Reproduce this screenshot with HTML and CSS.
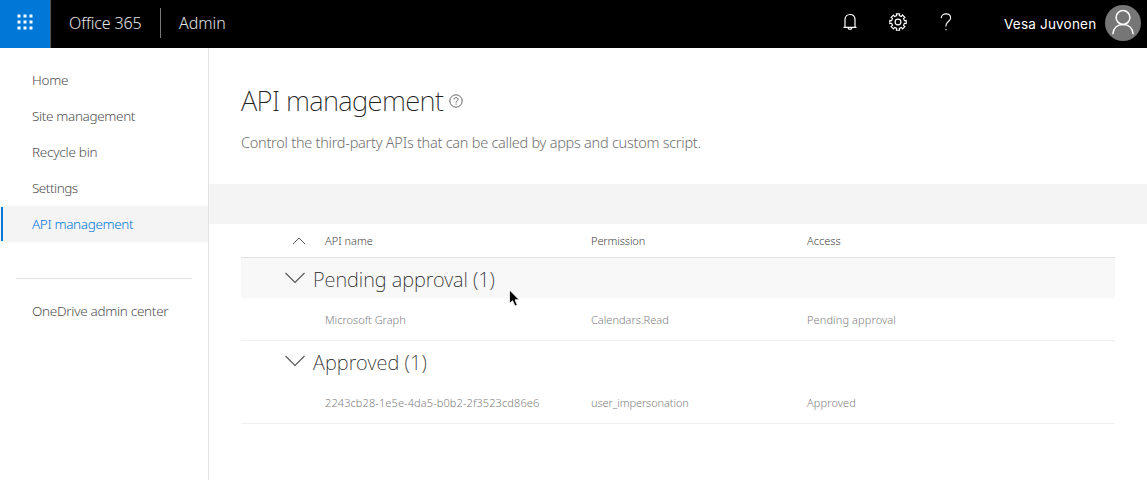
FILE: index.html
```html
<!DOCTYPE html>
<html lang="en">
<head>
<meta charset="utf-8">
<title>API management</title>
<link rel="stylesheet" href="styles.css">
</head>
<body>
<header class="topbar">
  <div class="launcher">
    <svg width="16" height="16" viewBox="0 0 16 16" fill="#fff"><path d="M.5.5h3v3h-3zM6.500.5h3v3h-3zM12.500.5h3v3h-3zM.5 6.500h3v3h-3zM6.500 6.500h3v3h-3zM12.500 6.500h3v3h-3zM.5 12.500h3v3h-3zM6.500 12.500h3v3h-3zM12.500 12.500h3v3h-3z"/></svg>
  </div>
  <span class="suite">Office 365</span>
  <span class="app">Admin</span>
  <div class="tools">
    <svg class="bell" width="16" height="18" viewBox="0 0 16 18" fill="none" stroke="#fff" stroke-width="1.2"><path d="M1.500 14.400H14.500M3 14.200V6.600C3 3.400 5.200 1.500 8 1.500S13 3.400 13 6.600V14.200M6 14.600Q6.300 16.300 8 16.300T10 14.600"/></svg>
    <svg class="gear" width="18" height="18" viewBox="0 0 18 18" fill="none" stroke="#fff" stroke-width="1.150"><path d="M7.700 2.600 7.400.8H10.600L10.300 2.600 12.400 3.500 13.500 2 15.900 4.400 14.500 5.500 15.400 7.700 17.200 7.400V10.600L15.400 10.300 14.500 12.500 15.900 13.600 13.600 15.900 12.400 14.500 10.300 15.400 10.600 17.200H7.400L7.700 15.400 5.500 14.500 4.400 15.900 2.100 13.600 3.500 12.400 2.600 10.300.8 10.600V7.400L2.600 7.700 3.500 5.500 2.100 4.400 4.400 2.100 5.500 3.500Z"/><circle cx="9" cy="9" r="2.900"/></svg>
    <svg class="help" width="12" height="18" viewBox="0 0 12 18" fill="none" stroke="#fff" stroke-width="1.100"><path d="M1.200 5.300C1.200 2.500 3.200.9 5.900.9S10.600 2.500 10.600 4.900C10.600 8.300 6 8.800 6 12.400V13.500M6 16V17.300"/></svg>
  </div>
  <span class="user">Vesa Juvonen</span>
  <svg class="avatar" width="36" height="36" viewBox="0 0 36 36"><circle cx="18" cy="18" r="18" fill="#767676"/><g fill="none" stroke="#fff" stroke-width="1.500"><circle cx="18" cy="12.500" r="6.900"/><path d="M7.800 29.200C8.300 23.200 12.300 19.400 18 19.400S27.700 23.200 28.200 29.200"/></g></svg>
</header>
<div class="body">
  <nav class="side">
    <a class="item home">Home</a>
    <a class="item site">Site management</a>
    <a class="item bin">Recycle bin</a>
    <a class="item settings">Settings</a>
    <a class="item active">API management</a>
    <hr class="rule">
    <a class="item onedrive">OneDrive admin center</a>
  </nav>
  <main class="main">
    <div class="heading">
      <h1 class="title">API management</h1>
      <svg width="14" height="14" viewBox="0 0 14 14" fill="none" stroke="#555" stroke-width=".9"><circle cx="7" cy="7" r="6.200"/><path d="M5 5.500C5 4.200 5.800 3.600 7 3.600S9 4.200 9 5.300C9 6.700 7.100 6.800 7.100 8.600M7.100 9.600V10.700"/></svg>
    </div>
    <p class="desc">Control the third-party APIs that can be called by apps and custom script.</p>
    <div class="commandbar"></div>
    <section class="list">
      <div class="row head">
        <svg class="sort" width="14" height="8" viewBox="0 0 14 8" fill="none" stroke="#555" stroke-width="1"><path d="M1 7 7 1 13 7"/></svg>
        <span class="c1">API name</span><span class="c2 perm">Permission</span><span class="c3">Access</span>
      </div>
      <div class="group hover">
        <svg class="chev" width="20" height="12" viewBox="0 0 20 12" fill="none" stroke="#555" stroke-width="1.100"><path d="M.5 1 10 10.500 19.500 1"/></svg>
        <h2 class="gname pending">Pending approval (1)</h2>
        <svg class="cursor" width="14" height="20" viewBox="0 0 14 20"><path d="M1.500 1V14.500L4.600 11.700 6.900 17 9.300 16 7 10.800H11.200Z" fill="#000" stroke="#fff" stroke-width=".8"/></svg>
      </div>
      <div class="row item-row">
        <span class="c1">Microsoft Graph</span><span class="c2">Calendars.Read</span><span class="c3 status">Pending approval</span>
      </div>
      <div class="group">
        <svg class="chev" width="20" height="12" viewBox="0 0 20 12" fill="none" stroke="#555" stroke-width="1.100"><path d="M.5 1 10 10.500 19.500 1"/></svg>
        <h2 class="gname approved">Approved (1)</h2>
      </div>
      <div class="row item-row">
        <span class="c1 guid">2243cb28-1e5e-4da5-b0b2-2f3523cd86e6</span><span class="c2 perm">user_impersonation</span><span class="c3 status">Approved</span>
      </div>
    </section>
  </main>
</div>
</body>
</html>
```

FILE: styles.css
```css
* { box-sizing: border-box; }
body { margin: 0; width: 1147px; height: 480px; overflow: hidden; background: #fff; color: #444; font-family: "Noto Sans", "Open Sans", sans-serif; font-weight: 300; display: flex; flex-direction: column; }
h1, h2, p { margin: 0; font-weight: 300; white-space: nowrap; }
span, a { white-space: nowrap; }
svg { display: block; flex: none; }
.topbar { height: 48px; flex: none; background: #000; color: #e4e4e4; display: flex; align-items: center; padding-right: 6px; }
.launcher { width: 51px; height: 48px; background: #0078d7; border-right: 1px solid #555; display: flex; align-items: center; justify-content: center; padding-bottom: 4px; }
.suite { width: 110px; height: 30px; line-height: 30px; padding-left: 18px; border-right: 1px solid #777; font-size: 16px; letter-spacing: -.15px; margin-bottom: 2px; }
.app { padding-left: 18px; font-size: 16px; line-height: 30px; margin-bottom: 2px; }
.tools { margin-left: auto; display: flex; align-items: center; margin-bottom: 5px; }
.gear { margin-left: 31px; }
.help { margin-left: 33px; }
.user { color: #fff; font-family: Inter, sans-serif; font-weight: 400; font-size: 13.5px; letter-spacing: .2px; width: 93px; margin-left: 52px; margin-right: 8px; }
.avatar { margin-bottom: 2px; }
.body { flex: 1; display: flex; min-height: 0; }
.side { width: 209px; border-right: 1px solid #e2e2e2; padding-top: 14px; display: flex; flex-direction: column; flex: none; }
.item { height: 36px; line-height: 36px; padding-left: 32px; font-size: 13.5px; letter-spacing: -.35px; color: #505050; }
.home, .bin { letter-spacing: -.25px; }
.settings { letter-spacing: -.5px; }
.onedrive { letter-spacing: -.3px; }
.active { background: linear-gradient(#0078d7, #0078d7) 1px 1px / 2px 34px no-repeat, #f4f4f4; color: #0078d7; }
.rule { width: 176px; height: 1px; border: 0; background: #e5e5e5; margin: 36px 16px 14px; }
.main { flex: 1; min-width: 0; }
.heading { height: 44px; margin-top: 31px; padding-left: 32px; display: flex; align-items: center; gap: 6px; }
.title { font-size: 27.5px; font-weight: 200; letter-spacing: -.62px; line-height: 44px; width: 202px; color: #222; }
.desc { height: 24px; line-height: 24px; margin-top: 7px; padding-left: 32px; font-size: 14.5px; letter-spacing: -.26px; color: #707070; }
.commandbar { height: 40px; margin-top: 30px; background: #f4f4f4; }
.list { width: 874px; margin-left: 32px; }
.row { display: grid; grid-template-columns: 84px 266px 216px 1fr; align-items: center; font-size: 11px; }
.c1 { grid-column: 2; }
.perm { letter-spacing: -.1px; }
.status { letter-spacing: .1px; }
.guid { letter-spacing: .1px; }
.head { height: 34px; border-bottom: 1px solid #e1e1e1; }
.sort { margin-left: 51px; }
.group { height: 40px; display: flex; align-items: center; padding-left: 44px; gap: 8px; position: relative; }
.hover { background: #f8f8f8; }
.gname { font-size: 20px; font-weight: 200; line-height: 40px; margin-top: 3px; color: #222; }
.pending { letter-spacing: -.02px; }
.approved { letter-spacing: .1px; }
.item-row { height: 43px; border-bottom: 1px solid #f0f0f0; color: #808080; }
.cursor { position: absolute; left: 267px; top: 31px; }
```
